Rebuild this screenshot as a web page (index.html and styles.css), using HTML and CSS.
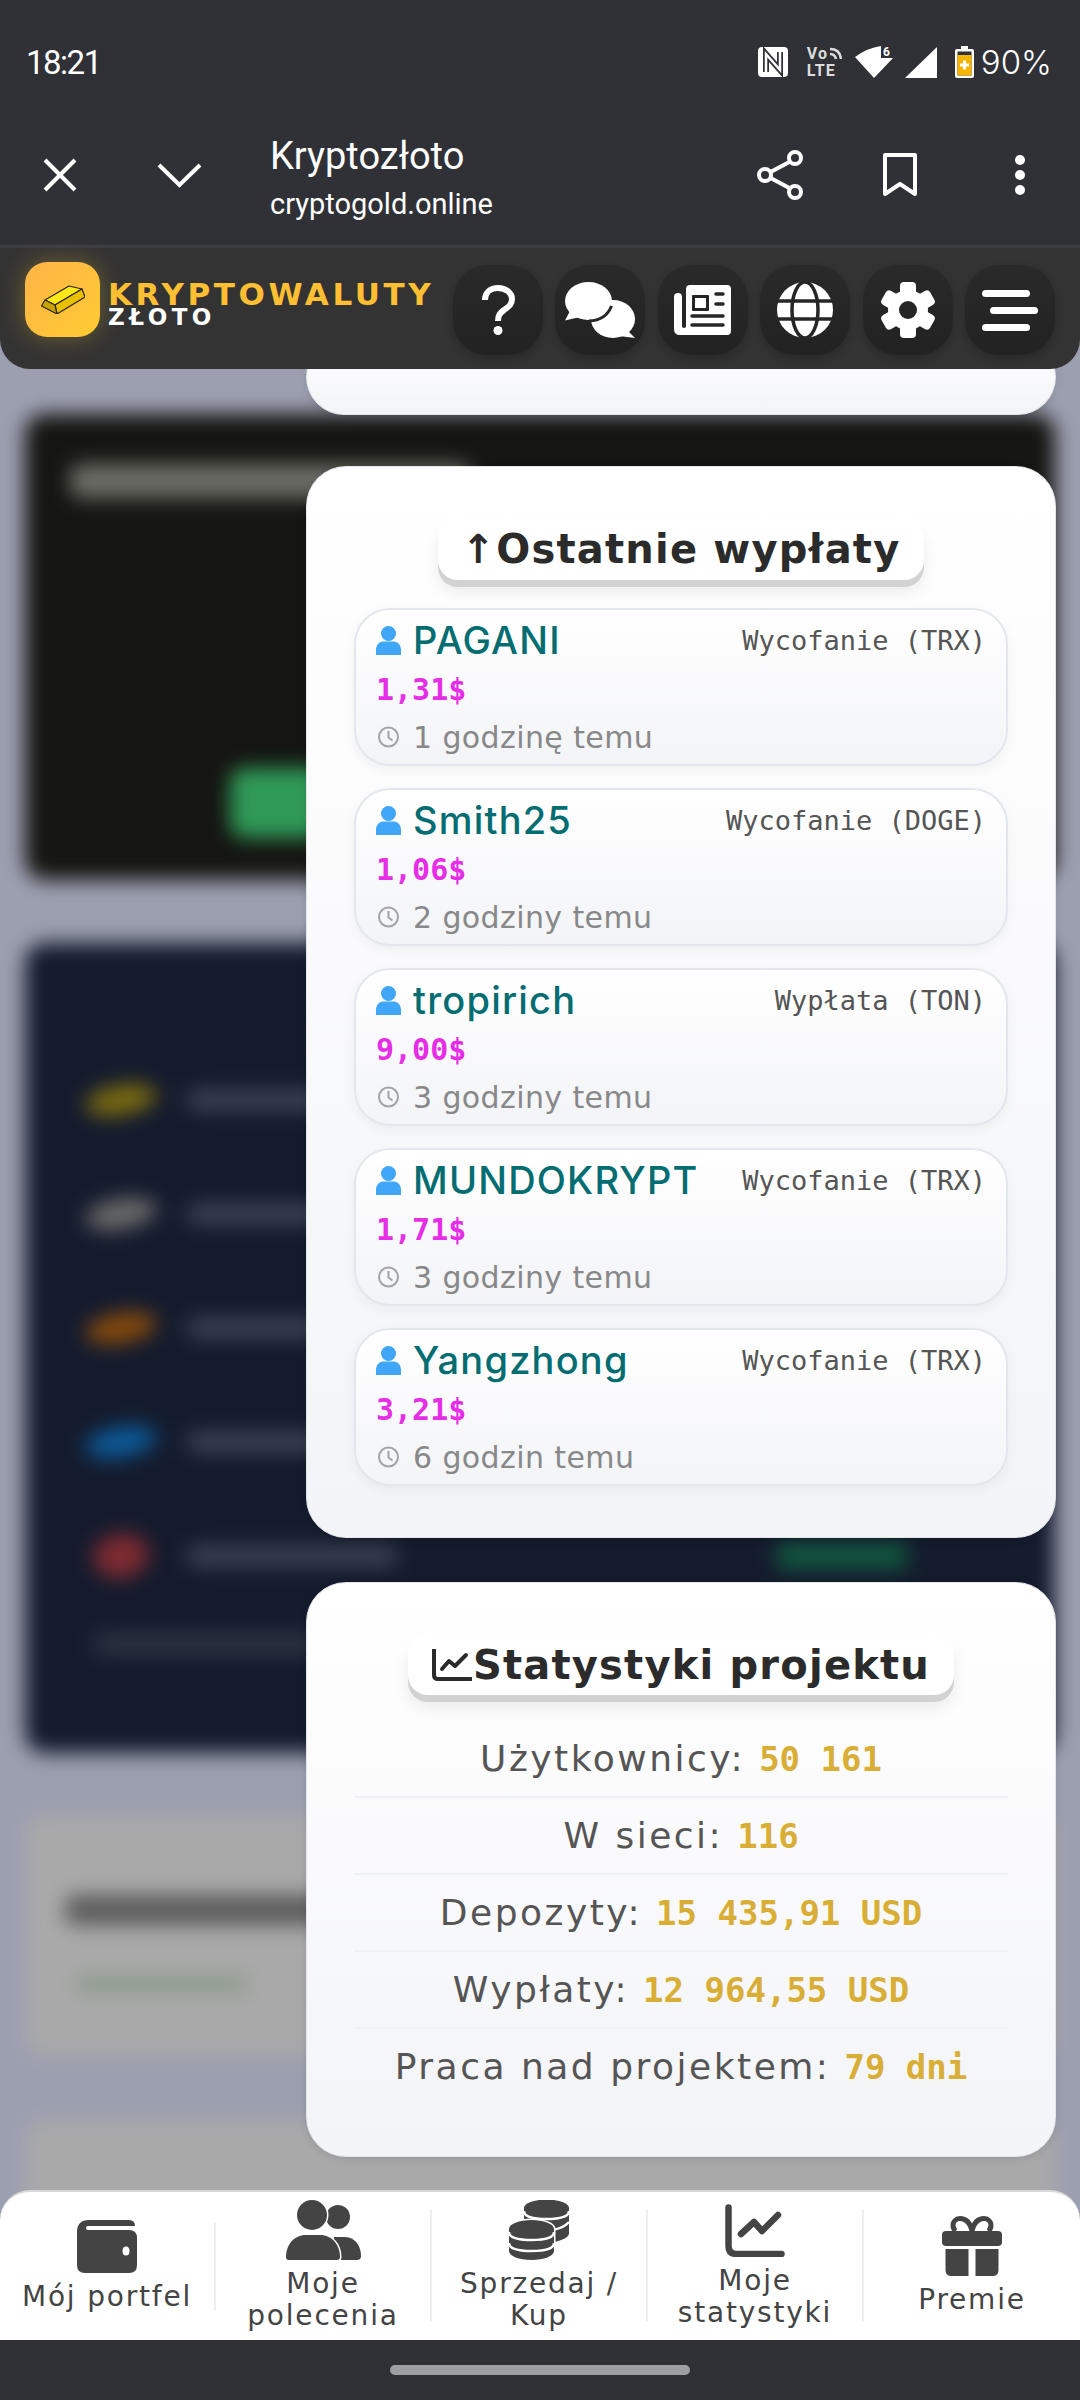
FILE: index.html
```html
<!DOCTYPE html>
<html lang="pl">

<head>
    <meta charset="UTF-8">
    <meta name="viewport" content="width=device-width, initial-scale=1.0">
    <title>Kryptozłoto</title>
    <link rel="stylesheet" href="styles.css">
</head>

<body>
    <svg class="defs" width="0" height="0">
        <symbol id="person" viewBox="0 0 25 29">
            <circle cx="12.500" cy="7.500" r="7.500" fill="#3fa6f8" />
            <path d="M0 29v-5c0-6 4-8.500 8-8.500h9c4 0 8 2.500 8 8.500v5z" fill="#3fa6f8" />
        </symbol>
        <symbol id="clock" viewBox="0 0 22 22">
            <circle cx="11" cy="11" r="9.500" fill="none" stroke="#a3a3a3" stroke-width="2" />
            <path d="M11 5v6.500l4 3" fill="none" stroke="#a3a3a3" stroke-width="2" />
        </symbol>
    </svg>

    <!-- pasek systemu -->
    <div class="status">
        <span class="time">18:21</span>
        <div class="status-icons">
            <svg width="30" height="30" viewBox="0 0 30 30">
                <rect width="30" height="30" rx="4" fill="#fff" />
                <path d="M8 25V7l14 16V5" fill="none" stroke="#303136" stroke-width="6" />
                <path d="M8 25V7l14 16V5" fill="none" stroke="#fff" stroke-width="2.500" />
            </svg>
            <div class="volte">
                <span class="vo">Vo<svg width="13" height="13" viewBox="0 0 13 13">
                        <path d="M1 2q10 0 11 10M1 7q5 0 6 5" fill="none" stroke="#ddd" stroke-width="2.500" />
                    </svg></span>
                <span>LTE</span>
            </div>
            <svg class="wifi" width="38" height="32" viewBox="0 0 38 32">
                <path d="M0 11Q12 2 26 0v12h12L19 32z" fill="#fff" />
                <text x="28" y="10" fill="#fff" font-size="12" font-weight="700" font-family="Roboto">6</text>
            </svg>
            <svg class="signal" width="32" height="31" viewBox="0 0 32 31">
                <path d="M32 0v31H0z" fill="#fff" />
            </svg>
            <svg class="battery" width="19" height="32" viewBox="0 0 19 32">
                <path d="M6 0h7v3h4q2 0 2 2v25q0 2-2 2H2q-2 0-2-2V5q0-2 2-2h4z" fill="#fff" />
                <rect x="2.500" y="5.500" width="14" height="24" fill="#303136" />
                <rect x="2.500" y="9" width="14" height="20.500" fill="#f7b500" />
                <path d="M9.500 14.500v9M5 19h9" stroke="#fff" stroke-width="3" />
            </svg>
            <span class="percent">90%</span>
        </div>
    </div>

    <!-- pasek przegladarki -->
    <div class="toolbar">
        <svg class="tool-close" width="34" height="34" viewBox="0 0 34 34">
            <path d="M2 2l30 30M32 2L2 32" stroke="#fff" stroke-width="4" fill="none" />
        </svg>
        <svg class="tool-down" width="45" height="26" viewBox="0 0 45 26">
            <path d="M2 3l20.500 20L43 3" stroke="#fff" stroke-width="4" fill="none" />
        </svg>
        <div class="tool-title">
            <span class="tool-name">Kryptozłoto</span>
            <span class="tool-url">cryptogold.online</span>
        </div>
        <svg class="tool-share" width="46" height="50" viewBox="0 0 46 50">
            <path d="M38 9L8 25l30 16" stroke="#fff" stroke-width="4" fill="none" />
            <circle cx="38" cy="8" r="6" fill="#303136" stroke="#fff" stroke-width="4" />
            <circle cx="8" cy="25" r="6" fill="#303136" stroke="#fff" stroke-width="4" />
            <circle cx="38" cy="42" r="6" fill="#303136" stroke="#fff" stroke-width="4" />
        </svg>
        <svg class="tool-mark" width="34" height="44" viewBox="0 0 34 44">
            <path d="M2 2h30v39L17 31 2 41z" stroke="#fff" stroke-width="4" fill="none" stroke-linejoin="round" />
        </svg>
        <div class="tool-dots"><i></i><i></i><i></i></div>
    </div>

    <!-- naglowek strony -->
    <header class="header">
        <div class="logo">
            <svg width="44" height="29" viewBox="0 0 44 29">
                <path d="M4 15L28 1l13 3-27 16z" fill="#ffe81a" stroke="#2d2500" stroke-width="1.200" stroke-linejoin="round" />
                <path d="M14 20L41 4l3 8-28 17z" fill="#e8c000" stroke="#2d2500" stroke-width="1.200" stroke-linejoin="round" />
                <path d="M.5 21L4 15l10 5 2 9z" fill="#c9a400" stroke="#2d2500" stroke-width="1.200" stroke-linejoin="round" />
            </svg>
        </div>
        <div class="brand">
            <span class="brand-top">KRYPTOWALUTY</span>
            <span class="brand-sub">ZŁOTO</span>
        </div>
        <nav class="head-btns">
            <a class="head-btn"><svg width="34" height="50" viewBox="0 0 34 50">
                    <path d="M4 15C4 7 10 3 17 3c8 0 14 5 14 11 0 6-4 8-8 11-4 3-6 5-6 11" fill="none" stroke="#fff" stroke-width="6" />
                    <circle cx="17" cy="45.500" r="4.500" fill="#fff" />
                </svg></a>
            <a class="head-btn"><svg width="70" height="56" viewBox="0 0 70 56">
                    <ellipse cx="48" cy="37" rx="22" ry="19" fill="#fff" />
                    <path d="M60 46l10 10-16-2z" fill="#fff" />
                    <path d="M6 27L0 38.500 15 35z" fill="#fff" />
                    <ellipse cx="23.500" cy="19" rx="23.500" ry="19" fill="#fff" />
                    <path d="M46.500 24C43 33 35 38.500 24 39" fill="none" stroke="#262626" stroke-width="3" />
                </svg></a>
            <a class="head-btn"><svg width="57" height="50" viewBox="0 0 57 50">
                    <path d="M12 4q0-4 4-4h37q4 0 4 4v42q0 4-4 4H6q-6 0-6-6V12q0-4 4-4t4 4v29q0 2 2 2t2-2z" fill="#fff" />
                    <rect x="18" y="10" width="17" height="16" rx="1" fill="#262626" />
                    <rect x="21" y="13" width="11" height="10" fill="#fff" />
                    <path d="M42 9h7M42 19h7M18 31h31M18 40h31" stroke="#262626" stroke-width="3.500" stroke-linecap="round" />
                </svg></a>
            <a class="head-btn"><svg width="56" height="56" viewBox="0 0 56 56">
                    <circle cx="28" cy="28" r="28" fill="#fff" />
                    <path d="M0 19h56M0 37h56" stroke="#262626" stroke-width="3.500" />
                    <ellipse cx="28" cy="28" rx="13" ry="28" fill="none" stroke="#262626" stroke-width="3.500" />
                </svg></a>
            <a class="head-btn"><svg width="56" height="56" viewBox="0 0 56 56">
                    <g fill="#fff">
                        <rect x="20" y="0" width="16" height="56" rx="4" />
                        <rect x="20" y="0" width="16" height="56" rx="4" transform="rotate(60 28 28)" />
                        <rect x="20" y="0" width="16" height="56" rx="4" transform="rotate(120 28 28)" />
                    </g>
                    <circle cx="28" cy="28" r="20" fill="#fff" />
                    <circle cx="28" cy="28" r="9" fill="#262626" />
                </svg></a>
            <a class="head-btn head-bars"><i></i><i></i><i></i></a>
        </nav>
    </header>

    <main class="main">
        <!-- rozmyte tlo strony -->
        <div class="backdrop">
            <div class="bg-card bg-black">
                <div class="bg-title"></div>
                <div class="bg-green"></div>
            </div>
            <div class="bg-card bg-navy">
                <div class="bg-row"><i class="coin c-gold"></i><b></b></div>
                <div class="bg-row"><i class="coin c-gray"></i><b></b></div>
                <div class="bg-row"><i class="coin c-orange"></i><b></b></div>
                <div class="bg-row"><i class="coin c-blue"></i><b></b></div>
                <div class="bg-row"><i class="coin c-red"></i><b></b><em></em></div>
                <div class="bg-foot"></div>
            </div>
            <div class="bg-card bg-gray">
                <div class="bg-dark"></div>
                <div class="bg-line"></div>
            </div>
            <div class="bg-card bg-gray bg-last"></div>
        </div>

        <div class="panels">
            <div class="panel panel-stub"></div>

            <section class="panel panel-pay">
                <h2 class="chip"><span class="chip-arrow">↑</span>Ostatnie wypłaty</h2>
                <div class="pay-list">
                    <div class="pay">
                        <div class="pay-top">
                            <svg class="pay-ico" width="25" height="29"><use href="#person" /></svg>
                            <span class="pay-name">PAGANI</span>
                            <span class="pay-type">Wycofanie (TRX)</span>
                        </div>
                        <div class="pay-sum">1,31$</div>
                        <div class="pay-time"><svg class="pay-ico" width="22" height="22"><use href="#clock" /></svg>1 godzinę temu</div>
                    </div>
                    <div class="pay">
                        <div class="pay-top">
                            <svg class="pay-ico" width="25" height="29"><use href="#person" /></svg>
                            <span class="pay-name">Smith25</span>
                            <span class="pay-type">Wycofanie (DOGE)</span>
                        </div>
                        <div class="pay-sum">1,06$</div>
                        <div class="pay-time"><svg class="pay-ico" width="22" height="22"><use href="#clock" /></svg>2 godziny temu</div>
                    </div>
                    <div class="pay">
                        <div class="pay-top">
                            <svg class="pay-ico" width="25" height="29"><use href="#person" /></svg>
                            <span class="pay-name">tropirich</span>
                            <span class="pay-type">Wypłata (TON)</span>
                        </div>
                        <div class="pay-sum">9,00$</div>
                        <div class="pay-time"><svg class="pay-ico" width="22" height="22"><use href="#clock" /></svg>3 godziny temu</div>
                    </div>
                    <div class="pay">
                        <div class="pay-top">
                            <svg class="pay-ico" width="25" height="29"><use href="#person" /></svg>
                            <span class="pay-name">MUNDOKRYPT</span>
                            <span class="pay-type">Wycofanie (TRX)</span>
                        </div>
                        <div class="pay-sum">1,71$</div>
                        <div class="pay-time"><svg class="pay-ico" width="22" height="22"><use href="#clock" /></svg>3 godziny temu</div>
                    </div>
                    <div class="pay">
                        <div class="pay-top">
                            <svg class="pay-ico" width="25" height="29"><use href="#person" /></svg>
                            <span class="pay-name">Yangzhong</span>
                            <span class="pay-type">Wycofanie (TRX)</span>
                        </div>
                        <div class="pay-sum">3,21$</div>
                        <div class="pay-time"><svg class="pay-ico" width="22" height="22"><use href="#clock" /></svg>6 godzin temu</div>
                    </div>
                </div>
            </section>

            <section class="panel panel-stats">
                <h2 class="chip"><svg class="chip-chart" width="40" height="32" viewBox="0 0 40 32">
                        <path d="M2 1v25q0 4 4 4h33" fill="none" stroke="#2b2b2b" stroke-width="4" stroke-linecap="round" />
                        <path d="M10 20l7-8 6 5 11-11" fill="none" stroke="#2b2b2b" stroke-width="4" stroke-linecap="round" stroke-linejoin="round" />
                    </svg>Statystyki projektu</h2>
                <div class="stat">Użytkownicy: <b>50 161</b></div>
                <div class="stat">W sieci: <b>116</b></div>
                <div class="stat">Depozyty: <b>15 435,91 USD</b></div>
                <div class="stat">Wypłaty: <b>12 964,55 USD</b></div>
                <div class="stat">Praca nad projektem: <b>79 dni</b></div>
            </section>
        </div>
    </main>

    <!-- dolne menu -->
    <nav class="bottom">
        <a class="bottom-item">
            <svg width="60" height="53" viewBox="0 0 60 53">
                <path d="M12 0h40q6 0 6 6H11q-2 0-2 2t2 2h41q8 0 8 8v27q0 8-8 8H8q-8 0-8-8V12Q0 0 12 0z" fill="#444" />
                <ellipse cx="49" cy="31" rx="3.500" ry="4.500" fill="#fff" />
            </svg>
            <span>Mój portfel</span>
        </a>
        <a class="bottom-item two">
            <svg width="75" height="60" viewBox="0 0 75 60">
                <circle cx="52" cy="17" r="12" fill="#444" />
                <path d="M48 37h11c10 0 16 9 16 19q0 4-4 4H48z" fill="#444" />
                <circle cx="26" cy="15" r="15" fill="#444" stroke="#fff" stroke-width="3" paint-order="stroke" />
                <path d="M20 35h14c12 0 20 10 20 22q0 3-3 3H3q-3 0-3-3c0-12 8-22 20-22z" fill="#444" stroke="#fff" stroke-width="3" paint-order="stroke" />
            </svg>
            <span>Moje<br>polecenia</span>
        </a>
        <a class="bottom-item two">
            <svg width="60" height="60" viewBox="0 0 60 60">
                <path d="M15 8h45v25q0 6-15 9H15z" fill="#444" />
                <ellipse cx="37.500" cy="8" rx="22.500" ry="8.500" fill="#444" />
                <path d="M15 11q0 8 22.500 8T60 11M30 31q22 0 30-9" fill="none" stroke="#fff" stroke-width="2.500" />
                <path d="M0 29a22.500 9 0 0 1 45 0v22c0 5-10 9-22.500 9S0 56 0 51z" fill="#444" stroke="#fff" stroke-width="3" paint-order="stroke" />
                <path d="M0 32q0 8 22.500 8T45 32M0 43q0 8 22.500 8T45 43" fill="none" stroke="#fff" stroke-width="2.500" />
            </svg>
            <span>Sprzedaj /<br>Kup</span>
        </a>
        <a class="bottom-item two">
            <svg width="60" height="53" viewBox="0 0 60 53">
                <path d="M3.500 3.500V42q0 8 8 8H56.500" fill="none" stroke="#444" stroke-width="6.500" stroke-linecap="round" />
                <path d="M16 30l13-12 8 9 16-16" fill="none" stroke="#444" stroke-width="6.500" stroke-linecap="round" stroke-linejoin="round" />
            </svg>
            <span>Moje<br>statystyki</span>
        </a>
        <a class="bottom-item last">
            <svg width="60" height="60" viewBox="0 0 60 60">
                <path d="M30 15C28 6 23 2.500 18 2.500 13.500 2.500 11 6 11 9s1 5 3 6M30 15c2-9 7-12.500 12-12.500 4.500 0 7 3.500 7 6.500s-1 5-3 6" fill="none" stroke="#444" stroke-width="5" />
                <rect x="0" y="15" width="60" height="15" rx="4" fill="#444" />
                <path d="M3.500 33H26.500v27H9.500q-6 0-6-6zM33.500 33H56.500v21q0 6-6 6H33.500z" fill="#444" />
            </svg>
            <span>Premie</span>
        </a>
    </nav>

    <div class="gesture"><i></i></div>
</body>

</html>
```

FILE: styles.css
```css
* {
    box-sizing: border-box;
}

body {
    margin: 0;
    width: 1080px;
    height: 2400px;
    display: flex;
    flex-direction: column;
    overflow: hidden;
    font-family: "DejaVu Sans", "Noto Sans", sans-serif;
    background-color: #9b9fb0;
}

.defs {
    position: absolute;
}

svg {
    display: block;
    flex-shrink: 0;
}

/* status bar */
.status {
    height: 84px;
    padding: 40px 28px 0 26px;
    display: flex;
    justify-content: space-between;
    align-items: center;
    background-color: #303136;
    color: #fff;
    font-family: "Roboto", sans-serif;
}

.time {
    font-size: 33px;
    letter-spacing: -1.500px;
}

.status-icons {
    display: flex;
    align-items: center;
}

.volte {
    margin-left: 19px;
    width: 35px;
    display: flex;
    flex-direction: column;
    font-size: 16px;
    font-weight: 700;
    line-height: 17px;
    letter-spacing: 1px;
    color: #ddd;
}

.vo {
    display: flex;
    align-items: center;
    gap: 1px;
}

.wifi {
    margin-left: 13px;
}

.signal {
    margin-left: 12px;
}

.battery {
    margin-left: 18px;
}

.percent {
    margin-left: 7px;
    font-family: "Inter", sans-serif;
    font-size: 33px;
    font-weight: 300;
}

/* browser toolbar */
.toolbar {
    height: 161px;
    padding: 20px 55px 0 43px;
    display: flex;
    align-items: center;
    background-color: #303136;
    color: #fff;
    font-family: "Roboto", sans-serif;
}

.tool-down {
    margin-left: 80px;
}

.tool-title {
    margin: 12px 0 0 68px;
    display: flex;
    flex-direction: column;
}

.tool-name {
    font-size: 38px;
    line-height: 46px;
}

.tool-url {
    font-size: 29px;
    line-height: 50px;
}

.tool-share {
    margin-left: auto;
}

.tool-mark {
    margin-left: 80px;
}

.tool-dots {
    margin-left: 98px;
    display: flex;
    flex-direction: column;
    gap: 5px;
}

.tool-dots i {
    width: 10px;
    height: 10px;
    border-radius: 50%;
    background-color: #fff;
}

/* site header */
.header {
    height: 124px;
    padding: 3px 25px 0;
    display: flex;
    align-items: center;
    position: relative;
    z-index: 5;
    background-color: #333;
    border-top: 3px solid #3c3d43;
    border-radius: 0 0 30px 30px;
}

.logo {
    width: 75px;
    height: 75px;
    margin-top: -21px;
    display: flex;
    justify-content: center;
    align-items: center;
    border-radius: 22px;
    background: linear-gradient(135deg, #ffb347, #ffcc33);
    box-shadow: 0 0 24px rgba(255, 204, 51, .3);
}

.brand {
    margin: -12px 0 0 8px;
    display: flex;
    flex-direction: column;
    font-weight: 700;
}

.brand-top {
    font-size: 31px;
    line-height: 26px;
    letter-spacing: 3.600px;
    color: #ffbf33;
}

.brand-sub {
    font-size: 23px;
    line-height: 20px;
    letter-spacing: 4.500px;
    color: #fff;
}

.head-btns {
    margin-left: auto;
    display: flex;
    gap: 12.400px;
}

.head-btn {
    width: 90px;
    height: 90px;
    display: flex;
    flex-direction: column;
    justify-content: center;
    align-items: center;
    border-radius: 34px;
    background: linear-gradient(#2a2a2a, #222);
    box-shadow: 0 4px 8px rgba(0, 0, 0, .2);
}

.head-bars {
    gap: 10px;
    align-items: flex-end;
    padding-right: 17px;
}

.head-bars i {
    display: block;
    width: 48px;
    height: 7px;
    margin-right: 8px;
    border-radius: 4px;
    background-color: #fff;
}

.head-bars i:nth-child(2) {
    margin-right: 0;
}

/* main area */
.main {
    flex: 1;
    margin: -30px 0;
    position: relative;
    overflow: hidden;
}

.backdrop {
    position: absolute;
    top: 0;
    left: 0;
    right: 0;
    bottom: 0;
    padding: 75px 25px 0;
    display: flex;
    flex-direction: column;
    filter: blur(10px);
    background-color: #9b9fb0;
}

.bg-card {
    border-radius: 20px;
    flex-shrink: 0;
}

.bg-black {
    height: 466px;
    padding: 50px 45px 0;
    background-color: #151511;
}

.bg-title {
    width: 400px;
    height: 34px;
    border-radius: 10px;
    background-color: #6e6e68;
}

.bg-green {
    width: 360px;
    height: 70px;
    margin: 270px 0 0 160px;
    border-radius: 14px;
    background-color: #2f9a58;
}

.bg-navy {
    height: 810px;
    margin-top: 63px;
    padding: 100px 0 0 60px;
    background-color: #141b2d;
}

.bg-row {
    height: 114px;
    display: flex;
    align-items: center;
    gap: 30px;
}

.coin {
    width: 72px;
    height: 30px;
    border-radius: 50%;
    transform: rotate(-10deg);
}

.c-gold {
    background-color: #7a6a10;
}

.c-gray {
    background-color: #6a6a6a;
}

.c-orange {
    background-color: #85490c;
}

.c-blue {
    background-color: #0b5a98;
}

.c-red {
    height: 44px;
    width: 56px;
    margin: 0 8px;
    background-color: #7e2a30;
}

.bg-row b {
    width: 210px;
    height: 20px;
    border-radius: 8px;
    background-color: #3c4454;
}

.bg-row em {
    width: 130px;
    height: 26px;
    margin-left: 350px;
    background-color: #10583f;
}

.bg-foot {
    width: 220px;
    height: 22px;
    margin: 20px 0 0 10px;
    background-color: #2d3342;
}

.bg-gray {
    background-color: #a9a9a9;
}

.bg-gray.bg-card:not(.bg-last) {
    height: 241px;
    margin-top: 62px;
    padding: 80px 0 0 40px;
}

.bg-dark {
    width: 420px;
    height: 30px;
    border-radius: 10px;
    background-color: #5c5c5c;
}

.bg-line {
    width: 170px;
    height: 18px;
    margin: 50px 0 0 12px;
    background-color: #8c9c8c;
}

.bg-last {
    height: 200px;
    margin-top: 64px;
}

/* overlay cards */
.panels {
    position: relative;
    padding-right: 24px;
    display: flex;
    flex-direction: column;
    align-items: flex-end;
}

.panel {
    width: 750px;
    padding: 51px 47px;
    border-radius: 40px;
    display: flex;
    flex-direction: column;
    align-items: center;
    background: linear-gradient(#fff, #f3f4f7);
    border: 1px solid #e3e5ea;
    box-shadow: 0 2px 8px rgba(0, 0, 0, .1);
}

.panel-stub {
    height: 76px;
    padding: 0;
    margin-bottom: 51px;
}

.panel-pay {
    height: 1072px;
    margin-bottom: 44px;
}

.panel-stats {
    height: 575px;
}

.chip {
    height: 62px;
    margin: 0;
    padding: 0 24px;
    display: flex;
    align-items: center;
    font-size: 40px;
    font-weight: 700;
    letter-spacing: 1.200px;
    color: #2b2b2b;
    background-color: #fff;
    border-radius: 20px;
    box-shadow: 0 7px 0 #d2d2d2, 0 12px 16px rgba(0, 0, 0, .08);
}

.chip-chart {
    margin-right: 1px;
}

.pay-list {
    width: 100%;
    margin-top: 28px;
    display: flex;
    flex-direction: column;
    gap: 22px;
}

.pay {
    height: 158px;
    padding: 9px 20px 0;
    border: 2px solid #e3e6ec;
    border-radius: 36px;
    background: linear-gradient(#fff, #f3f4f7);
    box-shadow: 0 4px 12px rgba(0, 0, 0, .05);
}

.pay-top {
    height: 42px;
    display: flex;
    align-items: center;
}

.pay-ico {
    margin-right: 12px;
    width: 25px;
}

.pay-name {
    font-family: "Inter", sans-serif;
    font-size: 38px;
    font-weight: 500;
    letter-spacing: 1.200px;
    color: #046d72;
}

.pay-type {
    margin-left: auto;
    font-family: "DejaVu Sans Mono", monospace;
    font-size: 27px;
    color: #555;
}

.pay-sum {
    height: 50px;
    margin-top: 4px;
    line-height: 50px;
    font-family: "DejaVu Sans Mono", monospace;
    font-size: 30px;
    font-weight: 700;
    color: #e62ee6;
}

.pay-time {
    height: 36px;
    margin-top: 4px;
    display: flex;
    align-items: center;
    font-size: 30px;
    letter-spacing: .4px;
    color: #888;
}

.stat {
    width: 100%;
    height: 77px;
    line-height: 75px;
    text-align: center;
    font-size: 36px;
    letter-spacing: 2.500px;
    color: #555;
    border-bottom: 2px solid #f0f1f3;
}

.chip + .stat {
    margin-top: 26px;
}

.stat:last-child {
    border-bottom: none;
}

.stat b {
    font-family: "DejaVu Sans Mono", monospace;
    font-size: 34px;
    letter-spacing: 0;
    color: #d9ae36;
}

/* bottom menu */
.bottom {
    height: 150px;
    position: relative;
    z-index: 5;
    display: grid;
    grid-template-columns: repeat(5, 216px);
    align-items: center;
    background-color: #fff;
    border-top: 2px solid #d8d8d8;
    border-radius: 30px 30px 0 0;
}

.bottom-item {
    height: 88px;
    display: flex;
    flex-direction: column;
    justify-content: center;
    align-items: center;
    gap: 8px;
    text-align: center;
    font-size: 28px;
    letter-spacing: 1.800px;
    line-height: 32px;
    color: #444;
    border-right: 2px solid #eee;
}

.bottom-item.two {
    height: 112px;
}

.bottom-item.last {
    border-right: none;
}

.gesture {
    height: 60px;
    display: flex;
    justify-content: center;
    align-items: center;
    background-color: #303136;
}

.gesture i {
    width: 300px;
    height: 10px;
    border-radius: 5px;
    background-color: #9e9fa2;
}
```
